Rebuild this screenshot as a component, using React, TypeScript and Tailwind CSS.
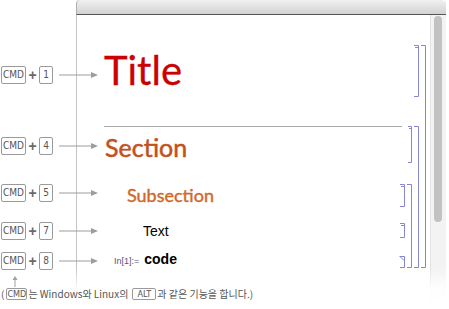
import React from "react";

function Key({ label, w }: { label: string; w: string }) {
  return (
    <div
      className={`${w} h-[18px] shrink-0 border border-[#9a9a9a] rounded-[2px] bg-white flex items-center justify-center text-[10px] text-[#555] font-['Liberation_Sans_Narrow','DejaVu_Sans_Condensed',sans-serif] leading-none`}
    >
      {label}
    </div>
  );
}

function Arrow() {
  return (
    <svg width="40" height="8" viewBox="0 0 40 8" className="ml-[6px] shrink-0 overflow-visible">
      <line x1="0" y1="4" x2="33" y2="4" stroke="#9d9d9d" strokeWidth="1.2" />
      <path d="M32 1 L39 4 L32 7 Z" fill="#9d9d9d" />
    </svg>
  );
}

function KeyRow({ digit, mt }: { digit: string; mt: string }) {
  return (
    <div className={`flex items-center h-[18px] w-[110px] shrink-0 ${mt}`}>
      <div className="ml-[1px] shrink-0">
        <Key label="CMD" w="w-[25px]" />
      </div>
      <div className="w-[13px] shrink-0 text-center text-[14px] font-bold text-[#6a6a6a] leading-none font-['Liberation_Sans',sans-serif]">
        +
      </div>
      <Key label={digit} w="w-[14px]" />
      <Arrow />
    </div>
  );
}

function SmallKey({ label, w }: { label: string; w: string }) {
  return (
    <span
      className={`${w} h-[12px] shrink-0 inline-flex items-center justify-center border border-[#9a9a9a] rounded-[2px] text-[9px] text-[#555] leading-none font-['Liberation_Sans_Narrow','DejaVu_Sans_Condensed',sans-serif]`}
    >
      {label}
    </span>
  );
}

export default function App() {
  return (
    <div className="relative w-[449px] h-[309px] bg-white overflow-hidden flex font-['Liberation_Sans',sans-serif]">
      {/* left column with shortcut keys */}
      <div className="w-[76px] shrink-0 relative z-20 flex flex-col">
        <KeyRow digit="1" mt="mt-[66px]" />
        <KeyRow digit="4" mt="mt-[53px]" />
        <KeyRow digit="5" mt="mt-[29px]" />
        <KeyRow digit="7" mt="mt-[20px]" />
        <KeyRow digit="8" mt="mt-[12px]" />
        <svg width="8" height="11" viewBox="0 0 8 11" className="ml-[11px] mt-[6px] shrink-0">
          <line x1="4" y1="3" x2="4" y2="11" stroke="#a0a0a0" strokeWidth="1" />
          <path d="M1.5 4 L4 0 L6.5 4 Z" fill="#a0a0a0" />
        </svg>
        <div className="mt-[1px] ml-[1px] h-[12px] shrink-0 flex items-center whitespace-nowrap text-[10px] text-[#555] font-['Noto_Sans_CJK_KR',sans-serif] leading-none">
          <span>(</span>
          <span className="ml-[2px] flex"><SmallKey label="CMD" w="w-[21px]" /></span>
          <span className="ml-[1px]">는 Windows와 Linux의</span>
          <span className="ml-[4px] flex"><SmallKey label="ALT" w="w-[24px]" /></span>
          <span className="ml-[1px]">과 같은 기능을 합니다.)</span>
        </div>
      </div>

      {/* notebook window */}
      <div className="w-[370px] h-[309px] shrink-0 flex flex-col relative">
        <div className="h-[15px] shrink-0 rounded-t-[4px] border-l border-[#b0b0b0] border-b border-b-[#555] bg-gradient-to-b from-[#f1f1f1] to-[#d2d2d2]" />
        <div className="flex-1 flex border-l border-[#c4c4c4]">
          <div className="flex-1 flex flex-col">
            <div className="mt-[35px] ml-[27px] text-[40px] leading-none text-[#cc0000] font-['Lato',sans-serif] [-webkit-text-stroke:0.3px_#cc0000]">
              Title
            </div>
            <div className="mt-[36px] ml-[27px] w-[298px] h-px bg-[#a8a8a8]" />
            <div className="mt-[8px] ml-[28px] text-[25px] leading-none text-[#c4501c] font-['Lato',sans-serif] [-webkit-text-stroke:0.5px_#c4501c]">
              Section
            </div>
            <div className="mt-[26px] ml-[50px] text-[18px] leading-none text-[#d0682a] font-['Lato',sans-serif] [-webkit-text-stroke:0.4px_#d0682a]">
              Subsection
            </div>
            <div className="mt-[20px] ml-[66px] text-[14px] leading-none text-black">Text</div>
            <div className="mt-[14px] ml-[37px] flex items-baseline leading-none">
              <span className="text-[9px] text-[#55557a]">In[1]:=</span>
              <span className="ml-[5px] text-[14px] font-bold text-black">code</span>
            </div>
          </div>
          <div className="w-[16px] shrink-0 bg-[#f3f3f3] border-l border-[#e3e3e3] pt-[1px]">
            <div className="ml-[3px] w-[8px] h-[206px] rounded-full bg-[#c2c2c2]" />
          </div>
        </div>
        <div className="absolute left-0 right-0 top-[268px] h-[41px] bg-gradient-to-b from-white/0 via-white/90 to-white" />
      </div>

      {/* cell brackets */}
      <svg
        width="449"
        height="309"
        viewBox="0 0 449 309"
        className="absolute left-0 top-0 z-10 pointer-events-none"
        fill="none"
        stroke="#8587d2"
        strokeWidth="1"
      >
        <path d="M414 45.5 H418.5 V96.5 H414" />
        <path d="M415 47.5 H418" />
        <path d="M421 45.5 H425.5 V267.5 H421" />
        <path d="M408 126.5 H411.5 V162.5 H408" />
        <path d="M409 128.5 H411" />
        <path d="M414 126.5 H418.5 V267.5 H414" />
        <path d="M400 184.5 H404.5 V206.5 H400" />
        <path d="M401 186.5 H404" />
        <path d="M407 184.5 H411.5 V267.5 H407" />
        <path d="M400 223.5 H404.5 V237.5 H400" />
        <path d="M401 225.5 H404" />
        <path d="M400 256.5 H404.5 V267.5 H400" />
        <path d="M399.5 256 L404 260.5" />
      </svg>
    </div>
  );
}
